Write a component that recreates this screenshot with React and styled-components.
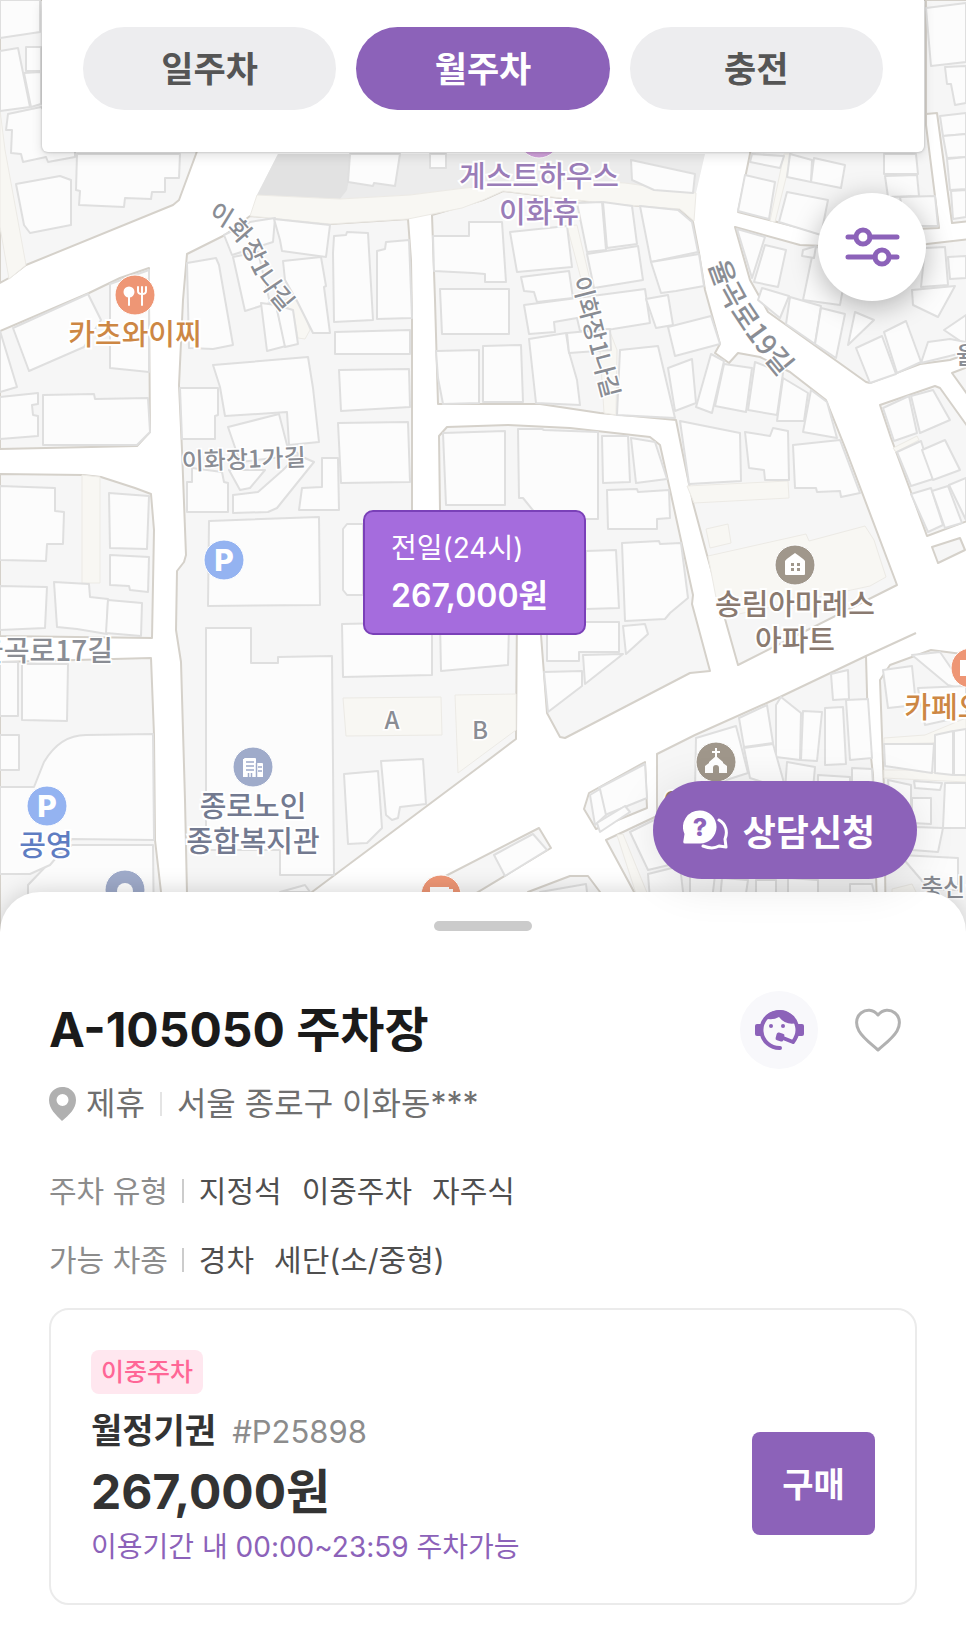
import React, {useState} from 'react'
import styled, {createGlobalStyle} from 'styled-components'

const blocks = [
  '0,0 250,0 196,154 179,200 173,205 26,265 9,278 0,283',
  '0,331 89,293 120,278 149,268 149,300 150,432 137,446 0,449',
  '187,254 225,235 250,216 275,218 330,224 408,219 411,260 412,320 412,545 517,610 516,739 483,764 312,892 246,940 188,940 185,800 181,662 176,630 177,571 184,562 186,555 182,450 179,385 183,300',
  '432,215 483,200 503,191 602,203 680,209 693,222 699,253 705,290 720,344 715,353 729,363 738,353 760,357 790,372 826,400 846,450 897,585 738,665 707,555 693,503 682,450 676,420 600,413 540,404 438,404 435,300',
  '440,510 439,436 447,427 508,425 570,428 650,437 660,445 670,490 693,595 692,604 710,671 690,673 565,738 560,737 547,713 541,635 540,600 440,570',
  '735,227 800,245 870,248 927,244 970,239 970,353 950,360 920,364 870,383 866,382 768,312 750,280',
  '750,154 738,212 820,233 939,228 926,125 926,0 770,0',
  '926,0 970,0 970,221 952,223 937,113 926,114',
  '880,405 935,386 940,388 970,430 970,520 927,536 912,495 891,438',
  '952,373 970,366 970,398',
  '932,547 960,538 965,550 938,563',
  '0,474 83,475 101,477 135,488 151,494 154,530 152,638 0,636',
  '0,662 151,658 154,735 155,840 161,892 163,940 0,940',
  '430,884 539,828 551,848 440,915',
  '528,892 570,876 588,876 600,892 620,940 500,940',
  '589,793 645,762 647,808 596,829 584,809',
  '657,754 695,735 780,697 866,656 868,730 873,775 878,940 660,940 606,840 657,816',
  '880,680 890,665 931,650 970,655 970,940 886,940 884,790',
]

const greyAreas = ['278,154 257,195 340,199 410,195 465,188 560,180 696,193 705,154']

const paths = [
  '0,110 5,150 26,265 9,279 0,227',
  '257,195 340,199 410,195 465,188 560,180 625,183 696,193 694,221 680,209 602,203 503,191 483,200 462,208 408,219 330,224 250,216',
  '784,154 792,154 775,222 770,221',
  '567,226 577,225 590,280 617,350 616,415 604,413 600,350',
  '290,298 300,303 310,330 305,339 298,338 293,310 276,303',
  '82,475 100,477 100,583 82,583',
  '343,698 441,697 442,735 346,736',
  '455,695 516,694 516,730 458,773',
  '687,486 788,481 789,498 694,503',
  '706,529 728,524 731,543 710,548',
  '708,556 806,534 809,541 865,526 874,540 886,577 870,586 720,618',
  '884,738 925,735 966,718 966,730 932,743 884,744',
  '884,770 911,770 966,776 966,782 884,778',
  '892,889 912,884 920,900 892,900',
  '617,835 623,834 650,900 638,900',
  '893,448 917,436 919,440 896,452',
]

const buildings = [
  '0,0 40,0 40,32 0,38',
  '0,51 18,48 30,107 0,111',
  '26,47 41,47 41,71 26,71',
  '24,73 41,72 41,104 31,107',
  '8,114 41,107 75,140 75,157 48,162 46,157 23,162 21,154 11,153 12,130 6,130',
  '16,184 60,176 71,180 71,225 30,233 24,225',
  '77,154 180,154 179,178 165,178 165,192 152,192 151,199 125,198 124,207 79,205 80,191 76,190',
  '13,328 88,294 101,320 84,347 29,371',
  '110,284 149,270 149,372 110,368',
  '0,331 17,387 0,392',
  '0,397 38,393 38,404 32,405 33,415 38,416 38,436 0,439',
  '43,395 94,394 95,399 148,398 150,432 137,445 43,445',
  '187,263 216,258 219,265 233,345 213,349 189,348',
  '224,235 250,222 275,218 273,242 232,255',
  '274,219 330,225 326,257 282,251 280,240',
  '233,257 258,252 270,303 245,311',
  '283,261 321,257 326,286 324,287 330,333 313,333 297,301 285,280',
  '261,303 276,305 286,346 267,351',
  '276,305 293,310 298,344 285,347',
  '213,365 308,357 313,388 319,442 289,445 287,412 225,416 220,387',
  '180,388 218,388 218,415 215,416 215,439 182,439',
  '228,427 279,414 287,445 300,455 240,462',
  '334,236 346,235 347,232 368,233 373,320 334,322 333,253',
  '377,251 385,249 386,242 409,240 412,318 377,319',
  '335,332 410,330 410,354 335,354',
  '339,370 409,369 410,407 341,411',
  '338,423 408,422 410,482 341,483',
  '433,236 469,236 469,222 502,222 506,282 485,282 485,274 473,273 434,271',
  '440,289 509,289 509,334 442,334',
  '436,351 479,350 479,403 443,404 438,378',
  '483,346 521,345 523,402 483,402',
  '510,232 567,226 572,267 517,272',
  '521,277 569,271 573,298 537,302 534,292 524,291',
  '577,203 602,202 606,250 587,252',
  '603,202 632,206 637,244 607,248',
  '587,254 638,246 643,280 594,288',
  '524,305 645,289 650,323 613,329 580,331 577,318 554,322 555,332 529,334',
  '529,339 566,333 569,352 577,380 580,405 536,403',
  '567,333 610,329 611,350 569,353',
  '620,350 658,346 675,418 617,415',
  '640,206 678,210 692,222 698,252 651,262',
  '651,262 699,254 704,286 676,291 661,293',
  '646,299 668,295 673,325 656,328',
  '668,327 711,316 720,344 675,356',
  '668,368 692,359 696,403 675,411',
  '711,354 724,361 712,413 696,407',
  '724,364 752,368 746,412 715,406',
  '755,362 783,373 777,415 748,410',
  '783,378 808,393 804,421 777,421',
  '811,390 827,402 837,438 803,432',
  '631,160 695,174 693,193 654,190 632,180',
  '350,154 400,154 395,186 374,183 373,186 348,182',
  '430,154 446,154 446,168 430,168',
  '745,175 775,182 769,219 738,211',
  '752,154 784,156 780,168 750,162',
  '790,154 812,160 811,182 787,177',
  '814,158 845,165 841,188 811,182',
  '787,192 828,200 821,235 779,222',
  '884,154 916,154 918,174 884,174',
  '885,176 917,175 919,196 888,197',
  '900,197 935,196 938,226 905,226',
  '926,8 966,3 966,62 931,66',
  '945,67 966,66 966,103 955,105 951,84 947,84',
  '940,116 966,113 966,134 943,136',
  '943,136 966,134 966,157 947,158',
  '947,159 966,157 966,189 950,190',
  '951,191 966,190 966,217 953,219',
  '737,229 765,237 752,278',
  '765,245 786,250 778,287 754,282',
  '762,288 789,296 780,318 758,300',
  '790,297 821,306 815,344 786,324',
  '821,308 845,314 836,358 815,344',
  '855,312 874,320 848,345',
  '856,348 882,336 896,374 870,383',
  '884,332 906,321 921,362 897,373',
  '912,290 955,286 938,317 913,305',
  '944,330 966,315 966,345',
  '928,342 950,339 966,342 966,352 921,363',
  '814,247 850,250 840,305 803,300',
  '803,250 816,246 814,258 802,256',
  '925,248 945,247 948,285 921,287',
  '948,257 966,256 966,278 950,279',
  '883,408 909,396 917,433 894,441',
  '911,396 933,390 950,420 920,433',
  '897,452 921,441 933,479 911,486',
  '922,450 945,440 960,470 933,480',
  '911,494 931,488 943,525 928,532',
  '932,491 948,486 962,523 945,528',
  '949,485 966,478 966,520',
  '443,433 505,431 505,505 446,505',
  '518,429 542,429 544,430 598,432 598,519 540,519 523,498 519,498',
  '602,436 628,436 630,482 603,483',
  '631,438 655,442 667,479 636,483',
  '607,490 637,489 638,492 669,490 670,518 657,519 657,529 608,529',
  '586,551 616,550 619,608 586,609',
  '622,543 659,541 660,544 681,543 688,598 670,613 665,619 625,621',
  '586,622 619,622 619,652 579,652 579,661 547,661 547,630',
  '623,626 645,624 648,634 626,654',
  '583,655 623,654 585,684',
  '544,672 582,671 582,686 548,712',
  '680,421 740,433 741,481 689,484',
  '745,432 770,436 773,428 788,431 789,480 765,480 764,470 749,468',
  '793,445 840,440 860,493 841,497 840,491 817,492 816,488 795,488',
  '0,486 55,488 55,511 64,512 63,544 47,544 46,561 0,560',
  '109,493 149,496 147,549 110,548',
  '110,555 149,557 148,592 130,590 129,586 110,585',
  '54,582 89,584 90,597 108,599 107,634 77,629 57,627',
  '0,586 47,587 45,628 0,630',
  '108,600 142,603 141,636 106,633',
  '0,662 18,662 18,716 0,716',
  '22,664 68,664 67,721 22,720',
  '0,735 19,735 19,770 0,770',
  '28,885 50,862 72,845 153,845 154,940 28,940',
  '187,482 192,482 192,468 222,472 224,482 228,483 228,512 187,512',
  '229,470 240,490 250,488 265,470',
  '283,470 298,455 314,462 277,508 268,512 233,513 233,495 258,492',
  '302,488 322,487 322,458 338,458 339,510 299,510',
  '209,521 319,517 320,605 208,606',
  '206,628 251,628 251,663 278,663 278,657 332,656 334,875 280,875 280,850 206,850',
  '343,529 347,524 363,524 363,595 347,595 343,590',
  '342,624 432,622 432,675 343,677',
  '440,622 509,625 508,665 441,671',
  '344,774 378,771 382,828 367,843 348,844',
  '381,761 423,759 426,804 400,807 398,818 392,820 386,815',
  '280,892 305,885 310,892',
  '831,674 848,670 849,699 833,700',
  '776,705 781,697 801,713 800,760 776,757',
  '803,711 822,712 817,761 801,760',
  '825,708 843,707 846,764 825,765',
  '846,700 868,699 872,758 850,760',
  '739,718 767,705 773,743 744,747',
  '696,738 736,726 748,773 695,790',
  '744,748 773,744 777,758 786,790 750,778',
  '787,762 815,767 812,800 785,790',
  '818,775 850,777 850,800 818,800',
  '852,768 872,769 874,800 852,800',
  '630,832 664,815 690,860 648,870',
  '648,874 680,866 684,900 650,900',
  '690,875 715,875 712,900 690,900',
  '722,878 748,880 745,900 720,900',
  '756,880 776,880 776,900 756,900',
  '788,878 818,880 818,900 788,900',
  '850,884 872,884 876,900 850,900',
  '883,670 912,666 916,705 888,708',
  '912,655 940,652 966,690 948,685',
  '918,688 966,686 966,716 925,725 920,700',
  '884,744 934,744 932,773 885,766',
  '935,735 953,731 953,775 935,773',
  '954,731 966,729 966,775 954,775',
  '888,780 911,785 911,807 890,806',
  '914,781 942,783 940,790 915,788',
  '912,798 931,798 931,824 912,823',
  '945,783 966,783 966,828 943,828',
  '915,827 943,828 938,852 912,850',
  '900,855 958,858 958,890 930,890',
  '494,855 533,834 547,850 505,876',
  '540,892 586,884 588,900 540,900',
  '599,788 645,764 647,798 605,815',
  '590,795 600,789 606,815 595,825',
  '597,823 625,806 630,812 600,832',
]

const markerColors = {
  food: '#ee9675',
  parking: '#94b3f1',
  office: '#9fabca',
  place: '#a0978b',
  stay: '#d3a3dd',
}

const labelColors = {
  food: '#cd8744',
  parking: '#5f7dc2',
  office: '#737a90',
  place: '#8a7a70',
  stay: '#9a7db8',
  road: '#8a8d94',
}

const Glyph = ({ kind }) => {
  if (kind === 'restaurant') return (
    <g fill="#fff" stroke="#fff" strokeWidth="2" strokeLinecap="round">
      <circle cx="-6" cy="-3" r="4.5"/>
      <path d="M-6 0V10M7 -3V10" fill="none"/>
      <path d="M3 -8V-4Q3 -1 7 -1T11 -4V-8M7 -8V-2" fill="none"/>
    </g>
  )
  if (kind === 'office') return (
    <g>
      <path fill="#fff" d="M-9 -8q0-1 1-1H2q1 0 1 1V-4H9q1 0 1 1V10H-10V-8Z"/>
      <path stroke="#9fabca" strokeWidth="1.5" d="M-7 -5H1M-7 -1H1M-7 3H1M5 0H9M5 4H9M3.5 -4V10M-4.500 6V10M-1.500 6V10"/>
    </g>
  )
  if (kind === 'house') return (
    <g>
      <path fill="#fff" d="M-10 -4Q-10 -5 0 -12Q10 -5 10 -4V9q0 1-1 1H-9q-1 0-1-1Z"/>
      <path fill="#a0978b" d="M-4 -2h3v3h-3zM2 -2h3v3h-3zM-4 3h3v3h-3zM2 3h3v3h-3z"/>
    </g>
  )
  if (kind === 'church') return (
    <g>
      <path stroke="#fff" strokeWidth="2" d="M0 -14V-4M-4 -10H4"/>
      <path fill="#fff" d="M0 -6L7 0V1L11 4V11H3V6Q3 3 0 3T-3 6V11H-11V4L-7 1V0Z"/>
    </g>
  )
  if (kind === 'cup') return (
    <path fill="#fff" d="M-11 -8H8V-6H12V3H8V8H-11Z"/>
  )
  if (kind === 'dot') return <circle cy="1" r="8" fill="#fff"/>
  if (kind === 'parking') return (
    <ParkingLetter textAnchor="middle" y="11">P</ParkingLetter>
  )
  return null
}

const Marker = ({ x, y, tone, kind }) => (
  <g transform={`translate(${x} ${y})`}>
    <circle r="20" fill={markerColors[tone]} stroke="#fff" strokeWidth="1"/>
    <Glyph kind={kind}/>
  </g>
)

const CityMap = () => (
  <MapSvg viewBox="0 0 966 940" preserveAspectRatio="xMidYMin slice" role="img" aria-label="이화동 지도">
    <rect width="966" height="940" fill="#fff"/>
    <g fill="#f6f6f6" stroke="#d5d1ca" strokeWidth="2" strokeLinejoin="round">
      {blocks.map(p => <polygon key={p} points={p}/>)}
      <path d="M866 656L916 633" fill="none"/>
    </g>
    {greyAreas.map(p => <polygon key={p} points={p} fill="#ececec"/>)}
    <path d="M278 154L257 195L340 199L347 190L354 154Z" fill="#e2e2e2"/>
    <g fill="#f8f7f3" stroke="#eceae5" strokeWidth="1">
      {paths.map(p => <polygon key={p} points={p}/>)}
    </g>
    <g fill="#fcfcfc" stroke="#dfdfdf" strokeWidth="2" strokeLinejoin="round">
      {buildings.map(p => <polygon key={p} points={p}/>)}
      <path d="M0 787L34 787L44 762Q60 735 86 735L153 734L154 840L72 839L50 865L30 874L0 874Z"/>
    </g>

    <defs>
      <path id="road-a" d="M207 217Q236 230 248 260Q258 286 288 318"/>
      <path id="road-b" d="M572 279L606 410"/>
      <path id="road-c" d="M709 264Q720 312 798 398"/>
    </defs>
    <RoadLabel><textPath href="#road-a">이화장1나길</textPath></RoadLabel>
    <RoadLabel><textPath href="#road-b">이화장1나길</textPath></RoadLabel>
    <RoadLabel $big><textPath href="#road-c">율곡로19길</textPath></RoadLabel>
    <RoadLabel x="182" y="470" transform="rotate(-2 182 470)">이화장1가길</RoadLabel>
    <RoadLabel $big x="113" y="661" textAnchor="end">율곡로17길</RoadLabel>
    <RoadLabel x="921" y="896">충신길</RoadLabel>
    <RoadLabel x="956" y="364">율</RoadLabel>
    <RoadLabel x="392" y="729" textAnchor="middle">A</RoadLabel>
    <RoadLabel x="480" y="739" textAnchor="middle">B</RoadLabel>

    <PlaceLabel $tone="place" x="716" y="814">이화교회</PlaceLabel>

    <Marker x={135} y={295} tone="food" kind="restaurant"/>
    <Marker x={224} y={560} tone="parking" kind="parking"/>
    <Marker x={47} y={806} tone="parking" kind="parking"/>
    <Marker x={253} y={767} tone="office" kind="office"/>
    <Marker x={125} y={890} tone="office" kind="dot"/>
    <Marker x={795} y={565} tone="place" kind="house"/>
    <Marker x={716} y={762} tone="place" kind="church"/>
    <Marker x={971} y={668} tone="food" kind="cup"/>
    <Marker x={441} y={895} tone="food" kind="cup"/>
    <Marker x={539} y={138} tone="stay"/>

    <PlaceLabel $tone="food" x="135" y="345">카츠와이찌</PlaceLabel>
    <PlaceLabel $tone="stay" x="539" y="187">게스트하우스</PlaceLabel>
    <PlaceLabel $tone="stay" x="539" y="223">이화휴</PlaceLabel>
    <PlaceLabel $tone="office" x="253" y="817">종로노인</PlaceLabel>
    <PlaceLabel $tone="office" x="253" y="852">종합복지관</PlaceLabel>
    <PlaceLabel $tone="parking" x="46" y="856">공영</PlaceLabel>
    <PlaceLabel $tone="place" x="795" y="615">송림아마레스</PlaceLabel>
    <PlaceLabel $tone="place" x="795" y="651">아파트</PlaceLabel>
    <PlaceLabel $tone="food" x="971" y="718">카페오시정</PlaceLabel>
  </MapSvg>
)

const FilterIcon = () => (
  <svg width="55" height="40" viewBox="0 0 55 40" fill="none" stroke="#8c62b9" strokeWidth="5" strokeLinecap="round" aria-hidden="true">
    <path d="M3 10H10M25 10H52M3 30H30M45 30H52"/>
    <circle cx="18" cy="10" r="7"/>
    <circle cx="37" cy="30" r="7"/>
  </svg>
)

const ChatIcon = () => (
  <svg width="46" height="40" viewBox="0 0 46 40" aria-hidden="true">
    <path fill="#fff" d="M17 .5a16.500 16.500 0 1 1 0 33H2Q0 33.500 .3 31.500L1.500 24A16.500 16.500 0 0 1 17 .5Z"/>
    <path fill="none" stroke="#fff" strokeWidth="3" strokeLinejoin="round" strokeLinecap="round" d="M36 10C43 14 45 22 42 29L43 37L36 36C31 39 25 38 20 36"/>
    <QuestionMark x="17" y="26" textAnchor="middle">?</QuestionMark>
  </svg>
)

const AgentIcon = () => (
  <svg width="49" height="42" viewBox="0 0 49 42" fill="#8c62b9" aria-hidden="true">
    <rect x="0" y="15" width="8" height="12" rx="2"/>
    <rect x="41" y="15" width="8" height="12" rx="2"/>
    <path fill="none" stroke="#8c62b9" strokeWidth="4" strokeLinecap="round" strokeLinejoin="round" d="M25 39A18 18 0 1 1 42 17Q44 25 38 33L28 29"/>
    <path d="M9 9Q17 12 24 8Q31 17 42 14Q36 1 24 1Q14 2 9 9Z"/>
    <rect x="21" y="24" width="8" height="8" rx="2" transform="rotate(15 25 28)"/>
    <circle cx="16" cy="17" r="2"/>
    <circle cx="28" cy="17" r="2"/>
  </svg>
)

const HeartIcon = () => (
  <svg width="46" height="44" viewBox="0 0 46 44" fill="none" stroke="#b1b1b1" strokeWidth="3" strokeLinejoin="round" aria-hidden="true">
    <path d="M23 7C18 1 11 1 6 5C0 10 1 18 4 23C8 30 15 35 23 42C31 35 38 30 42 23C45 18 46 10 40 5C35 1 28 1 23 7Z"/>
  </svg>
)

const PinIcon = () => (
  <svg width="27" height="34" viewBox="0 0 27 34" fill="#b0b0b0" fillRule="evenodd" aria-hidden="true">
    <path d="M13 0A13 13 0 0 0 0 13C0 22 7 28 13 34C20 28 27 22 27 13A13 13 0 0 0 13 0ZM13.500 7a6 6 0 1 1 0 12a6 6 0 0 1 0-12Z"/>
  </svg>
)

const tabs = ['일주차', '월주차', '충전']

const specs = [
  { name: '주차 유형', values: ['지정석', '이중주차', '자주식'] },
  { name: '가능 차종', values: ['경차', '세단(소/중형)'] },
]

const App = () => {
  const [tab, setTab] = useState('월주차')

  return (
    <Page>
      <GlobalStyle/>
      <MapArea>
        <CityMap/>
        <TopPanel>
          {tabs.map(name => (
            <Tab key={name} type="button" $active={name === tab} aria-pressed={name === tab} onClick={() => setTab(name)}>
              {name}
            </Tab>
          ))}
        </TopPanel>
        <FilterButton type="button" aria-label="필터"><FilterIcon/></FilterButton>
        <PricePin type="button">
          <span>전일(24시)</span>
          <strong>267,000원</strong>
        </PricePin>
        <ConsultButton type="button"><ChatIcon/>상담신청</ConsultButton>
      </MapArea>

      <Sheet>
        <Handle/>
        <TitleRow>
          <Title>A-105050 주차장</Title>
          <AgentButton type="button" aria-label="고객센터"><AgentIcon/></AgentButton>
          <LikeButton type="button" aria-label="찜하기"><HeartIcon/></LikeButton>
        </TitleRow>
        <Address>
          <PinIcon/>
          <span>제휴</span>
          <Divider $light/>
          <span>서울 종로구 이화동***</span>
        </Address>
        <Specs>
          {specs.map(({ name, values }) => (
            <Spec key={name}>
              <SpecName>{name}</SpecName>
              <Divider/>
              {values.map(v => <SpecValue key={v}>{v}</SpecValue>)}
            </Spec>
          ))}
        </Specs>
        <Ticket>
          <TicketInfo>
            <Badge>이중주차</Badge>
            <TicketName>월정기권 <TicketCode>#P25898</TicketCode></TicketName>
            <Price>267,000원</Price>
            <Hours>이용기간 내 00:00~23:59 주차가능</Hours>
          </TicketInfo>
          <BuyButton type="button">구매</BuyButton>
        </Ticket>
      </Sheet>
    </Page>
  )
}
export default App

const GlobalStyle = createGlobalStyle`
  * {
    box-sizing: border-box;
  }
  body {
    margin: 0;
    background-color: #fff;
    font-family: Inter, "Noto Sans CJK KR", sans-serif;
  }
  button {
    border: none;
    padding: 0;
    font-family: inherit;
    cursor: pointer;
  }
`

const Page = styled.div`
  display: flex;
  flex-direction: column;
  min-height: 100vh;
`

const MapArea = styled.section`
  position: relative;
  flex: 1 0 700px;
  margin-bottom: -48px;
`

const MapSvg = styled.svg`
  position: absolute;
  top: 0;
  left: 0;
  width: 100%;
  height: 100%;
`

const RoadLabel = styled.text`
  font-family: "Noto Sans CJK KR", sans-serif;
  font-size: ${p => p.$big ? 28 : 24}px;
  font-weight: 500;
  fill: ${labelColors.road};
  stroke: #fff;
  stroke-width: 3px;
  paint-order: stroke;
`

const PlaceLabel = styled.text`
  font-family: "Noto Sans CJK KR", sans-serif;
  font-size: 29px;
  font-weight: 500;
  text-anchor: middle;
  fill: ${p => labelColors[p.$tone]};
  stroke: #fff;
  stroke-width: 4px;
  paint-order: stroke;
`

const ParkingLetter = styled.text`
  font-family: Inter, sans-serif;
  font-size: 30px;
  font-weight: 800;
  fill: #fff;
`

const QuestionMark = styled.text`
  font-family: Inter, sans-serif;
  font-size: 25px;
  font-weight: 800;
  fill: #8c62b9;
`

const TopPanel = styled.nav`
  position: relative;
  display: flex;
  gap: 20px;
  margin: 0 42px;
  padding: 27px 41px 42px;
  border-radius: 0 0 6px 6px;
  background-color: #fff;
  box-shadow: 0 0 2px 1px rgba(0, 0, 0, 0.12), 0 4px 12px rgba(0, 0, 0, 0.12);
`

const Tab = styled.button`
  flex: 1;
  height: 83px;
  padding-bottom: 4px;
  border-radius: 42px;
  font-size: 35px;
  font-weight: 600;
  background-color: ${p => p.$active ? '#8c62b9' : '#ededef'};
  color: ${p => p.$active ? '#fff' : '#555'};
`

const FilterButton = styled.button`
  position: absolute;
  top: 193px;
  right: 40px;
  display: flex;
  align-items: center;
  justify-content: center;
  width: 108px;
  height: 108px;
  border-radius: 50%;
  background-color: #fff;
  box-shadow: 0 6px 28px rgba(0, 0, 0, 0.28);
`

const PricePin = styled.button`
  position: absolute;
  top: 510px;
  left: 363px;
  display: flex;
  flex-direction: column;
  justify-content: center;
  gap: 8px;
  width: 223px;
  height: 125px;
  padding-bottom: 2px;
  padding-left: 26px;
  border: 2px solid #7a40b8;
  border-radius: 10px;
  background-color: #a56cdd;
  color: #fff;
  text-align: left;
  line-height: 40px;
  font-size: 28px;
  strong {
    font-size: 32px;
    font-weight: 600;
  }
`

const ConsultButton = styled.button`
  position: absolute;
  z-index: 2;
  right: 49px;
  bottom: 61px;
  display: flex;
  align-items: center;
  justify-content: center;
  gap: 14px;
  width: 264px;
  height: 98px;
  padding-right: 12px;
  border-radius: 49px;
  background-color: #8c62b9;
  color: #fff;
  font-size: 36px;
  font-weight: 600;
  box-shadow: 0 6px 44px rgba(0, 0, 0, 0.1);
`

const Sheet = styled.main`
  position: relative;
  z-index: 1;
  display: flex;
  flex-direction: column;
  padding: 29px 49px 47px;
  border-radius: 40px 40px 0 0;
  background-color: #fff;
  box-shadow: 0 0 24px rgba(0, 0, 0, 0.18);
`

const Handle = styled.div`
  align-self: center;
  width: 98px;
  height: 10px;
  border-radius: 5px;
  background-color: #cbcbcb;
`

const TitleRow = styled.header`
  display: flex;
  align-items: center;
  margin-top: 60px;
`

const Title = styled.h1`
  flex: 1;
  margin: 0;
  color: #1a1a1a;
  font-size: 48px;
  font-weight: 700;
  line-height: 78px;
`

const AgentButton = styled.button`
  display: flex;
  align-items: center;
  justify-content: center;
  width: 78px;
  height: 78px;
  border-radius: 50%;
  background-color: #f8f8fb;
`

const LikeButton = styled.button`
  display: flex;
  margin: 0 16px 0 37px;
  background: none;
`

const Address = styled.div`
  display: flex;
  align-items: center;
  gap: 10px;
  margin-top: 12px;
  color: #6f6f6f;
  font-size: 32px;
  line-height: 46px;
`

const Divider = styled.i`
  width: 2px;
  height: 24px;
  margin: 0 5px;
  background-color: ${p => p.$light ? '#e4e4e4' : '#ccc'};
`

const Specs = styled.div`
  display: flex;
  flex-direction: column;
  gap: 23px;
  margin-top: 41px;
`

const Spec = styled.div`
  display: flex;
  align-items: center;
  font-size: 30px;
  line-height: 46px;
`

const SpecName = styled.span`
  margin-right: 9px;
  color: #8c8c8c;
`

const SpecValue = styled.span`
  margin-left: 10px;
  margin-right: 10px;
  color: #4f4f4f;
`

const Ticket = styled.article`
  display: flex;
  align-items: center;
  justify-content: space-between;
  margin-top: 25px;
  padding: 40px 40px 37px;
  border: 2px solid #ebebeb;
  border-radius: 20px;
`

const TicketInfo = styled.div`
  display: flex;
  flex-direction: column;
  align-items: flex-start;
`

const Badge = styled.span`
  padding: 0 10px;
  border-radius: 8px;
  background-color: #ffe7ef;
  color: #ff6696;
  font-size: 25px;
  font-weight: 500;
  line-height: 44px;
`

const TicketName = styled.h2`
  display: flex;
  align-items: baseline;
  gap: 16px;
  margin: 13px 0 0;
  color: #333;
  font-size: 34px;
  font-weight: 600;
  line-height: 48px;
`

const TicketCode = styled.span`
  color: #8c8c8c;
  font-size: 31px;
  font-weight: 400;
`

const Price = styled.strong`
  color: #333;
  font-size: 48px;
  font-weight: 700;
  line-height: 72px;
`

const Hours = styled.span`
  color: #8c62b9;
  font-size: 28px;
  line-height: 38px;
`

const BuyButton = styled.button`
  width: 123px;
  height: 103px;
  margin-top: 50px;
  padding-bottom: 2px;
  border-radius: 8px;
  background-color: #8c62b9;
  color: #fff;
  font-size: 34px;
  font-weight: 600;
`
